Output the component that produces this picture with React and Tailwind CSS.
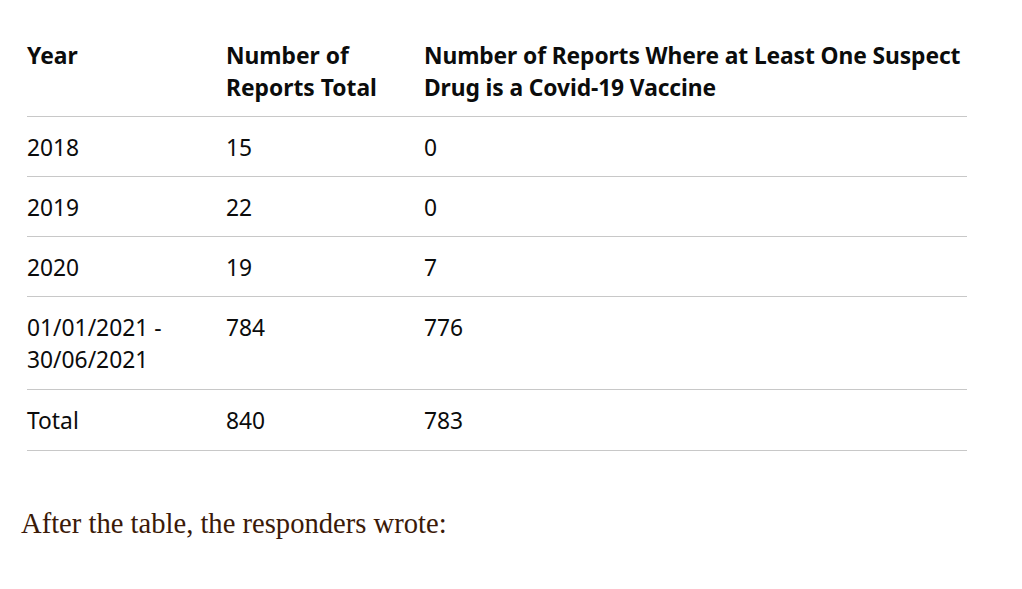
const rows = [
  ['2018', '15', '0'],
  ['2019', '22', '0'],
  ['2020', '19', '7'],
  ['01/01/2021 -\n30/06/2021', '784', '776'],
  ['Total', '840', '783'],
]

export default function App() {
  return (
    <div className="w-[1022px] h-[589px] bg-white overflow-hidden">
      <div className="pl-[27px] pt-[24px] w-[967px]">
        <table className="w-[940px] border-collapse text-[#0b0c0c] font-['Noto_Sans',sans-serif] text-[22.8px] leading-[32px]">
          <thead>
            <tr className="border-b border-[#c8c8c8]">
              <th className="w-[199px] text-left align-top font-bold pt-[16px] pb-[12px]">Year</th>
              <th className="w-[198px] text-left align-top font-bold pt-[16px] pb-[12px]">Number of<br />Reports Total</th>
              <th className="text-left align-top font-bold pt-[16px] pb-[12px] whitespace-nowrap tracking-[-0.1px]">Number of Reports Where at Least One Suspect<br />Drug is a Covid-19 Vaccine</th>
            </tr>
          </thead>
          <tbody>
            {rows.map((r, i) => (
              <tr key={i} className="border-b border-[#c8c8c8]">
                {r.map((c, j) => (
                  <td key={j} className={i > 2 ? 'align-top pt-[15px] pb-[13px] whitespace-pre-line' : 'align-top pt-[15px] pb-[12px] whitespace-pre-line'}>{c}</td>
                ))}
              </tr>
            ))}
          </tbody>
        </table>
      </div>
      <p className="mt-[53px] pl-[21px] text-[28.6px] leading-[40px] text-[#3b1a08] font-['Liberation_Serif',serif]">After the table, the responders wrote:</p>
    </div>
  )
}
